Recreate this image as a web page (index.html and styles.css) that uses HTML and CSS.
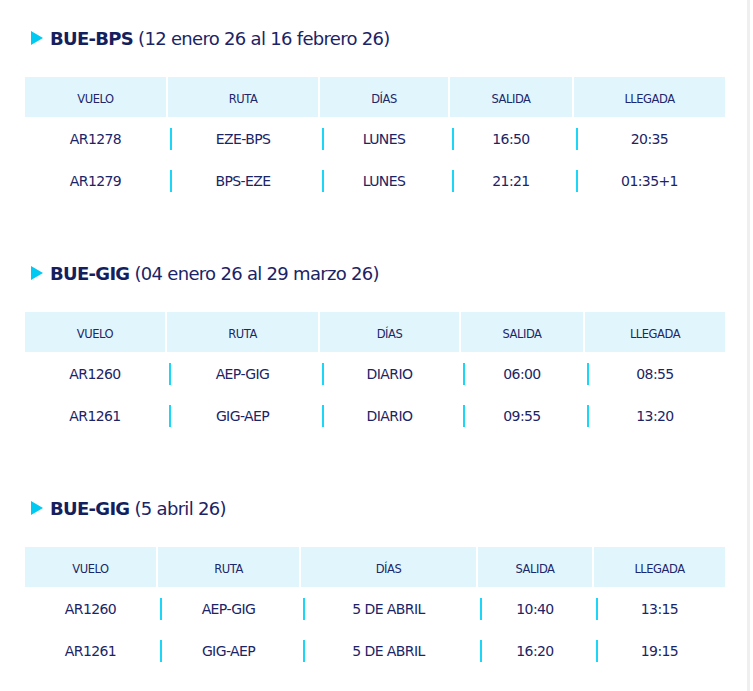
FILE: index.html
```html
<!DOCTYPE html>
<html lang="es">
<head>
<meta charset="utf-8">
<title>Horarios</title>
<link rel="stylesheet" href="styles.css">
</head>
<body>
<div class="page">
  <section class="block">
    <h2 class="title"><svg class="arrow" viewBox="0 0 12 14" width="12" height="14"><polygon points="0,0 12,7 0,14" fill="#00c9f2"/></svg><b>BUE-BPS</b> (12 enero 26 al 16 febrero 26)</h2>
    <table class="sched t1">
      <colgroup><col><col><col><col><col></colgroup>
      <thead><tr><th>VUELO</th><th>RUTA</th><th>DÍAS</th><th>SALIDA</th><th>LLEGADA</th></tr></thead>
      <tbody>
        <tr><td>AR1278</td><td class="sep">EZE-BPS</td><td class="sep">LUNES</td><td class="sep">16:50</td><td class="sep">20:35</td></tr>
        <tr><td>AR1279</td><td class="sep">BPS-EZE</td><td class="sep">LUNES</td><td class="sep">21:21</td><td class="sep">01:35+1</td></tr>
      </tbody>
    </table>
  </section>
  <section class="block">
    <h2 class="title"><svg class="arrow" viewBox="0 0 12 14" width="12" height="14"><polygon points="0,0 12,7 0,14" fill="#00c9f2"/></svg><b>BUE-GIG</b> (04 enero 26 al 29 marzo 26)</h2>
    <table class="sched t2">
      <colgroup><col><col><col><col><col></colgroup>
      <thead><tr><th>VUELO</th><th>RUTA</th><th>DÍAS</th><th>SALIDA</th><th>LLEGADA</th></tr></thead>
      <tbody>
        <tr><td>AR1260</td><td class="sep">AEP-GIG</td><td class="sep">DIARIO</td><td class="sep">06:00</td><td class="sep">08:55</td></tr>
        <tr><td>AR1261</td><td class="sep">GIG-AEP</td><td class="sep">DIARIO</td><td class="sep">09:55</td><td class="sep">13:20</td></tr>
      </tbody>
    </table>
  </section>
  <section class="block">
    <h2 class="title"><svg class="arrow" viewBox="0 0 12 14" width="12" height="14"><polygon points="0,0 12,7 0,14" fill="#00c9f2"/></svg><b>BUE-GIG</b> (5 abril 26)</h2>
    <table class="sched t3">
      <colgroup><col><col><col><col><col></colgroup>
      <thead><tr><th>VUELO</th><th>RUTA</th><th>DÍAS</th><th>SALIDA</th><th>LLEGADA</th></tr></thead>
      <tbody>
        <tr><td>AR1260</td><td class="sep">AEP-GIG</td><td class="sep">5 DE ABRIL</td><td class="sep">10:40</td><td class="sep">13:15</td></tr>
        <tr><td>AR1261</td><td class="sep">GIG-AEP</td><td class="sep">5 DE ABRIL</td><td class="sep">16:20</td><td class="sep">19:15</td></tr>
      </tbody>
    </table>
  </section>
</div>
</body>
</html>
```

FILE: styles.css
```css
html, body {
  margin: 0;
  padding: 0;
  background: #ffffff;
}

body {
  font-family: "DejaVu Sans", Verdana, sans-serif;
  color: #1d2769;
}

.page {
  width: 750px;
  min-height: 691px;
  box-sizing: border-box;
  border-right: 3px solid #efefef;
  padding: 26px 0 0 23px;
}

.block {
  margin-bottom: 60px;
}

.title {
  margin: 0 0 27px 8px;
  height: 24px;
  display: flex;
  align-items: center;
  font-size: 18px;
  font-weight: normal;
  letter-spacing: -0.7px;
  color: #1b2466;
  white-space: pre;
}

.title b {
  font-weight: bold;
  color: #151f5e;
}

.arrow {
  flex: none;
  margin-right: 7px;
}

.sched {
  table-layout: fixed;
  border-collapse: separate;
  border-spacing: 2px 0;
  width: 704px;
}

.sched th {
  background: #e1f6fc;
  height: 40px;
  box-sizing: border-box;
  padding: 3px 0 0;
  font-size: 11.5px;
  font-weight: normal;
  letter-spacing: -0.45px;
  color: #1d2769;
  text-align: center;
  vertical-align: middle;
}

.sched td {
  height: 42px;
  box-sizing: border-box;
  padding: 2px 0 0;
  font-size: 14px;
  letter-spacing: -0.6px;
  text-align: center;
  vertical-align: middle;
  color: #1b2566;
}

.sched td.sep {
  background: linear-gradient(#1cd6f7, #1cd6f7) no-repeat 2px 55% / 2px 22px;
}

.t1 col:nth-child(1) { width: 141px; }
.t1 col:nth-child(2) { width: 150px; }
.t1 col:nth-child(3) { width: 128px; }
.t1 col:nth-child(4) { width: 122px; }
.t1 col:nth-child(5) { width: 151px; }

.t2 col:nth-child(1) { width: 140px; }
.t2 col:nth-child(2) { width: 151px; }
.t2 col:nth-child(3) { width: 139px; }
.t2 col:nth-child(4) { width: 122px; }
.t2 col:nth-child(5) { width: 140px; }

.t3 col:nth-child(1) { width: 131px; }
.t3 col:nth-child(2) { width: 141px; }
.t3 col:nth-child(3) { width: 175px; }
.t3 col:nth-child(4) { width: 114px; }
.t3 col:nth-child(5) { width: 131px; }
```
